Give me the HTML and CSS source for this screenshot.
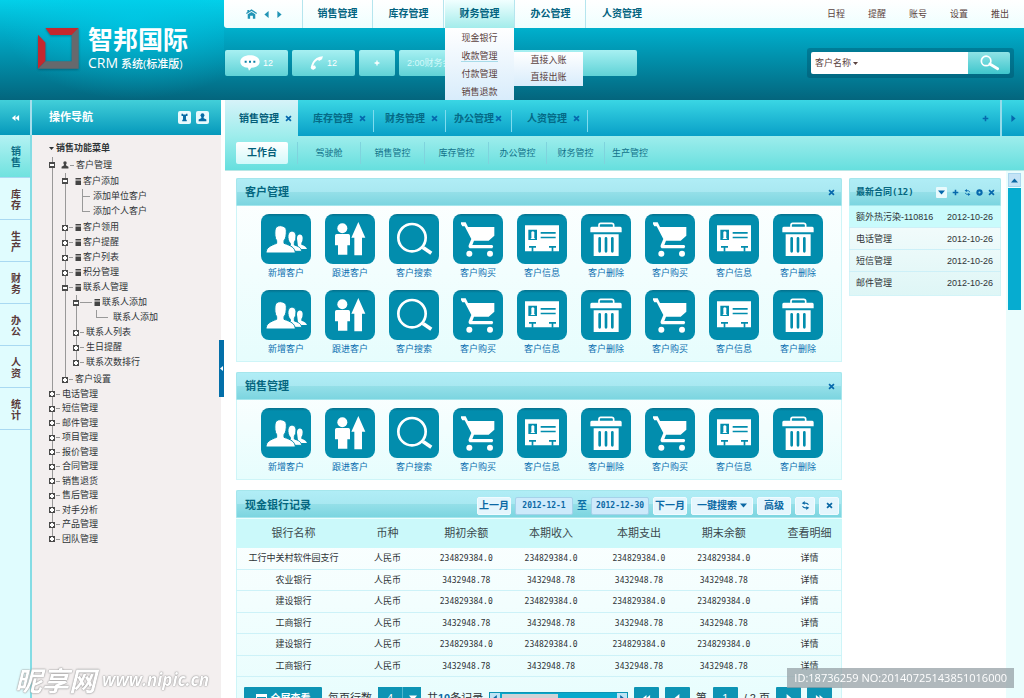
FILE: index.html
```html
<!DOCTYPE html>
<html lang="zh-CN">
<head>
<meta charset="utf-8">
<title>智邦国际 CRM 系统</title>
<link rel="stylesheet" href="styles.css">
</head>
<body>
<svg class="sprite" aria-hidden="true">
  <symbol id="i-users" viewBox="0 0 150 150"><path d="M108 74C107 58 125 58 125 72Q125 83 121 87V92Q135 96 138 105H112Z"/><path class="cut" d="M74 112Q74 100 88 94V88C82 83 80 72 81 63Q83 51 93 51Q104 52 105 63Q106 78 100 85V93C114 97 121 103 122 112Z"/><path class="cut" d="M15 117C15 101 28 95 47 88V80C41 72 41 60 42 48Q44 35 58 35Q76 36 76 50C76 62 75 74 69 80V88C90 95 102 101 103 117Z"/></symbol>
  <symbol id="i-follow" viewBox="0 0 150 150"><circle cx="52" cy="43" r="15"/><path d="M35 60H70Q75 60 75 65V94H67V122H39V94H30V65Q30 60 35 60ZM100 24L121 71H111V124H88V71H79Z"/></symbol>
  <symbol id="i-find" viewBox="0 0 150 150"><circle cx="69" cy="71" r="41" fill="none" stroke="#fff" stroke-width="8"/><path d="M97 98L104 104" fill="none" stroke="#fff" stroke-width="6"/><path d="M103 101L127 118" fill="none" stroke="#fff" stroke-width="11"/></symbol>
  <symbol id="i-cart" viewBox="0 0 150 150"><path d="M24 25H38L45 39H124V65L107 80H63L58 93H118Q123 97 118 103H50Q45 100 47 94L55 75L35 37H28Q22 31 24 25Z"/><circle cx="49" cy="119" r="9"/><circle cx="111" cy="119" r="9"/></symbol>
  <symbol id="i-card" viewBox="0 0 150 150"><path d="M24 34H126V112H24Z"/><path class="teal" d="M34 47H60V78H34ZM71 54H116V59H71ZM71 68H116V73H71ZM36 96H57V101H49V113H44V101H36ZM96 96H117V101H109V113H104V101H96Z"/><path d="M40 75Q45 72 43 64V54Q47 49 52 54V64Q50 72 55 75Z"/></symbol>
  <symbol id="i-trash" viewBox="0 0 150 150"><path d="M54 40V33Q54 28 59 28H92Q98 28 98 33V40" fill="none" stroke="#fff" stroke-width="5"/><path d="M32 38H118Q122 38 122 43V55H28V43Q28 38 32 38ZM38 61H113V126H38Z"/><path class="slot" d="M56 73V112M75 73V112M94 73V112"/></symbol>
  <symbol id="i-refresh" viewBox="0 0 12 12"><path d="M10 5Q8 2 4 3M2 7Q4 10 8 9" fill="none" stroke="currentColor" stroke-width="1.6"/><path d="M5 0V5L1 3ZM7 12V7L11 9Z" fill="currentColor"/></symbol>
  <symbol id="i-x" viewBox="0 0 10 10"><path d="M1.500 1.500L8.500 8.500M8.500 1.500L1.500 8.500" fill="none" stroke="currentColor" stroke-width="2.400"/></symbol>
  <symbol id="i-plus" viewBox="0 0 10 10"><path d="M5 1V9M1 5H9" fill="none" stroke="currentColor" stroke-width="2.200"/></symbol>
  <symbol id="i-down" viewBox="0 0 10 10"><path d="M0 2H10L5 8Z" fill="currentColor"/></symbol>
  <symbol id="i-up" viewBox="0 0 10 10"><path d="M0 8H10L5 2Z" fill="currentColor"/></symbol>
  <symbol id="i-left" viewBox="0 0 10 10"><path d="M8 0V10L2 5Z" fill="currentColor"/></symbol>
  <symbol id="i-right" viewBox="0 0 10 10"><path d="M2 0V10L8 5Z" fill="currentColor"/></symbol>
  <symbol id="i-first" viewBox="0 0 12 10"><path d="M6 0V10L0 5ZM12 0V10L6 5Z" fill="currentColor"/></symbol>
  <symbol id="i-last" viewBox="0 0 12 10"><path d="M0 0V10L6 5ZM6 0V10L12 5Z" fill="currentColor"/></symbol>
  <symbol id="i-person" viewBox="0 0 14 14"><circle cx="7" cy="3.500" r="3"/><path d="M5.500 5H8.500L9 8L13 10V13H1V10L5 8Z"/></symbol>
  <symbol id="i-file" viewBox="0 0 12 14"><path d="M1 0H12V3H1ZM1 5H12V14H1Z"/></symbol>
</svg>

<header class="header">
  <div class="brand">
    <svg class="brand-mark" viewBox="0 0 122 122" aria-hidden="true"><path fill="#c5282e" d="M22 0H121L101 21H37ZM0 20L22 43V98L0 121Z"/><path fill="#66696d" d="M121 0V121H0L22 99H100V21Z"/></svg>
    <div>
      <h1 class="brand-name">智邦国际</h1>
      <p class="brand-sub"><span class="brand-crm">CRM</span> 系统(标准版)</p>
    </div>
  </div>
  <div class="header-main">
    <div class="topbar">
      <div class="topbar-home">
        <button aria-label="首页"><svg class="ico-home" viewBox="0 0 32 28"><path d="M16 0L32 11L30 14L16 5L2 14L0 11ZM4 2H9V6L4 9ZM5 15L16 8L27 15V28H20V19H12V28H5Z" fill="currentColor"/></svg></button>
        <button aria-label="后退"><svg class="ico-s"><use href="#i-left"/></svg></button>
        <button aria-label="前进"><svg class="ico-s"><use href="#i-right"/></svg></button>
      </div>
      <nav class="topnav">
        <a href="#">销售管理</a>
        <a href="#">库存管理</a>
        <div class="topnav-open">
          <a href="#">财务管理</a>
          <ul class="menu">
            <li><a href="#">现金银行</a></li>
            <li><a href="#" class="is-current">收款管理</a>
              <ul class="submenu">
                <li><a href="#">直接入账</a></li>
                <li><a href="#">直接出账</a></li>
              </ul>
            </li>
            <li><a href="#">付款管理</a></li>
            <li><a href="#">销售退款</a></li>
          </ul>
        </div>
        <a href="#">办公管理</a>
        <a href="#">人资管理</a>
      </nav>
      <nav class="userlinks">
        <a href="#">日程</a><a href="#">提醒</a><a href="#">账号</a><a href="#">设置</a><a href="#">推出</a>
      </nav>
    </div>
    <div class="tools">
      <button class="tool"><svg class="ico-chat" viewBox="0 0 60 48"><path fill="#fff" d="M30 1C48 1 59 10 59 20C59 31 47 38 34 38L27 47L24 38C10 37 1 30 1 20C1 9 13 1 30 1Z"/><path fill="#0b7fa5" d="M14 17H20V23H14ZM27 17H33V23H27ZM40 17H46V23H40Z"/></svg>12</button>
      <button class="tool"><svg class="ico-phone" viewBox="0 0 40 42"><path fill="#fff" d="M38 1L28 2Q8 8 3 28L1 36Q4 42 10 41L17 36L14 28L9 30Q10 18 23 11L26 15L35 10Z"/></svg>12</button>
      <button class="tool tool-add" aria-label="添加"><svg class="ico-s"><use href="#i-plus"/></svg></button>
      <div class="tool tool-note">2:00财务会议</div>
      <form class="search">
        <div class="search-box">
          <select aria-label="搜索范围"><option>客户名称</option></select>
          <svg class="ico-caret" aria-hidden="true"><use href="#i-down"/></svg>
          <input type="text" aria-label="搜索内容">
        </div>
        <button type="button" aria-label="搜索"><svg class="ico-search" viewBox="0 0 56 46"><circle cx="18" cy="17" r="14" fill="none" stroke="#fff" stroke-width="5"/><path d="M29 26L52 40" stroke="#fff" stroke-width="8" stroke-linecap="round"/></svg></button>
      </form>
    </div>
  </div>
</header>

<div class="layout">
  <aside class="side">
    <div class="side-head">
      <button class="side-fold" aria-label="收起"><svg class="ico-first"><use href="#i-first"/></svg></button>
      <div class="side-title">
        <h2>操作导航</h2>
        <button aria-label="筛选"><svg viewBox="0 0 12 12"><path d="M2 1H4V2H8V1H10V4H8V9H9V11H3V9H4V4H2Z"/></svg></button>
        <button aria-label="用户"><svg viewBox="0 0 14 14"><use href="#i-person"/></svg></button>
      </div>
    </div>
    <div class="side-body">
      <nav class="rail">
        <a href="#" class="is-on">销售</a><a href="#">库存</a><a href="#">生产</a><a href="#">财务</a><a href="#">办公</a><a href="#">人资</a><a href="#">统计</a>
      </nav>
      <div class="tree">
        <p class="tree-title"><svg class="ico-tri"><use href="#i-down"/></svg>销售功能菜单</p>
        <ul class="tree-root">
          <li><div class="row row-tall"><i class="tg"></i><svg class="ico-person"><use href="#i-person"/></svg><i class="dash"></i>客户管理</div>
            <ul class="lv2">
              <li><div class="row row-tall"><i class="tg"></i><svg class="ico-file apart"><use href="#i-file"/></svg>客户添加</div>
                <ul class="leaf"><li class="row">添加单位客户</li><li class="row">添加个人客户</li></ul>
              </li>
              <li class="row"><i class="tg plus"></i><i class="dash"></i><svg class="ico-file"><use href="#i-file"/></svg>客户领用</li>
              <li class="row"><i class="tg plus"></i><i class="dash"></i><svg class="ico-file"><use href="#i-file"/></svg>客户提醒</li>
              <li class="row"><i class="tg plus"></i><i class="dash"></i><svg class="ico-file"><use href="#i-file"/></svg>客户列表</li>
              <li class="row"><i class="tg plus"></i><i class="dash"></i><svg class="ico-file"><use href="#i-file"/></svg>积分管理</li>
              <li><div class="row"><i class="tg"></i><i class="dash"></i><svg class="ico-file"><use href="#i-file"/></svg>联系人管理</div>
                <ul class="lv3">
                  <li><div class="row"><i class="tg"></i><i class="dash dash-long"></i><svg class="ico-file"><use href="#i-file"/></svg>联系人添加</div>
                    <ul class="leaf leaf-deep"><li class="row">联系人添加</li></ul>
                  </li>
                  <li class="row"><i class="tg plus"></i><i class="dash"></i>联系人列表</li>
                  <li class="row"><i class="tg plus"></i><i class="dash"></i>生日提醒</li>
                  <li class="row"><i class="tg plus"></i><i class="dash"></i>联系次数排行</li>
                </ul>
              </li>
              <li class="row"><i class="tg plus"></i><i class="dash"></i>客户设置</li>
            </ul>
          </li>
        </ul>
        <ul class="tree-root tree-more">
          <li class="row"><i class="tg plus"></i><i class="dash"></i>电话管理</li>
          <li class="row"><i class="tg plus"></i><i class="dash"></i>短信管理</li>
          <li class="row"><i class="tg plus"></i><i class="dash"></i>邮件管理</li>
          <li class="row"><i class="tg plus"></i><i class="dash"></i>项目管理</li>
          <li class="row"><i class="tg plus"></i><i class="dash"></i>报价管理</li>
          <li class="row"><i class="tg plus"></i><i class="dash"></i>合同管理</li>
          <li class="row"><i class="tg plus"></i><i class="dash"></i>销售退货</li>
          <li class="row"><i class="tg plus"></i><i class="dash"></i>售后管理</li>
          <li class="row"><i class="tg plus"></i><i class="dash"></i>对手分析</li>
          <li class="row"><i class="tg plus"></i><i class="dash"></i>产品管理</li>
          <li class="row"><i class="tg plus"></i><i class="dash"></i>团队管理</li>
        </ul>
      </div>
    </div>
    <button class="side-handle" aria-label="折叠侧栏"><svg class="ico-tiny"><use href="#i-left"/></svg></button>
  </aside>

  <main class="main">
    <div class="tabs">
      <div class="tab is-on"><a href="#">销售管理</a><button aria-label="关闭"><svg class="ico-x"><use href="#i-x"/></svg></button></div>
      <div class="tab tab-wide"><a href="#">库存管理</a><button aria-label="关闭"><svg class="ico-x"><use href="#i-x"/></svg></button></div>
      <div class="tab"><a href="#">财务管理</a><button aria-label="关闭"><svg class="ico-x"><use href="#i-x"/></svg></button></div>
      <div class="tab tab-tight"><a href="#">办公管理</a><button aria-label="关闭"><svg class="ico-x"><use href="#i-x"/></svg></button></div>
      <div class="tab tab-wide"><a href="#">人资管理</a><button aria-label="关闭"><svg class="ico-x"><use href="#i-x"/></svg></button></div>
      <button class="tabs-add" aria-label="新标签"><svg class="ico-x"><use href="#i-plus"/></svg></button>
      <button class="tabs-next" aria-label="下一组"><svg class="ico-x"><use href="#i-right"/></svg></button>
    </div>
    <nav class="subnav">
      <a href="#" class="is-on">工作台</a>
      <a href="#">驾驶舱</a><a href="#">销售管控</a><a href="#">库存管控</a><a href="#" class="narrow">办公管控</a><a href="#" class="narrow">财务管控</a><a href="#" class="last">生产管控</a>
    </nav>
    <div class="work">
      <div class="panels">
        <section class="panel">
          <div class="panel-head"><h3>客户管理</h3><button class="bare" aria-label="关闭"><svg class="ico-x"><use href="#i-x"/></svg></button></div>
          <div class="apps">
            <a href="#"><svg><use href="#i-users"/></svg>新增客户</a>
            <a href="#"><svg><use href="#i-follow"/></svg>跟进客户</a>
            <a href="#"><svg><use href="#i-find"/></svg>客户搜索</a>
            <a href="#"><svg><use href="#i-cart"/></svg>客户购买</a>
            <a href="#"><svg><use href="#i-card"/></svg>客户信息</a>
            <a href="#"><svg><use href="#i-trash"/></svg>客户删除</a>
            <a href="#"><svg><use href="#i-cart"/></svg>客户购买</a>
            <a href="#"><svg><use href="#i-card"/></svg>客户信息</a>
            <a href="#"><svg><use href="#i-trash"/></svg>客户删除</a>
            <a href="#"><svg><use href="#i-users"/></svg>新增客户</a>
            <a href="#"><svg><use href="#i-follow"/></svg>跟进客户</a>
            <a href="#"><svg><use href="#i-find"/></svg>客户搜索</a>
            <a href="#"><svg><use href="#i-cart"/></svg>客户购买</a>
            <a href="#"><svg><use href="#i-card"/></svg>客户信息</a>
            <a href="#"><svg><use href="#i-trash"/></svg>客户删除</a>
            <a href="#"><svg><use href="#i-cart"/></svg>客户购买</a>
            <a href="#"><svg><use href="#i-card"/></svg>客户信息</a>
            <a href="#"><svg><use href="#i-trash"/></svg>客户删除</a>
          </div>
        </section>
        <section class="panel">
          <div class="panel-head"><h3>销售管理</h3><button class="bare" aria-label="关闭"><svg class="ico-x"><use href="#i-x"/></svg></button></div>
          <div class="apps">
            <a href="#"><svg><use href="#i-users"/></svg>新增客户</a>
            <a href="#"><svg><use href="#i-follow"/></svg>跟进客户</a>
            <a href="#"><svg><use href="#i-find"/></svg>客户搜索</a>
            <a href="#"><svg><use href="#i-cart"/></svg>客户购买</a>
            <a href="#"><svg><use href="#i-card"/></svg>客户信息</a>
            <a href="#"><svg><use href="#i-trash"/></svg>客户删除</a>
            <a href="#"><svg><use href="#i-cart"/></svg>客户购买</a>
            <a href="#"><svg><use href="#i-card"/></svg>客户信息</a>
            <a href="#"><svg><use href="#i-trash"/></svg>客户删除</a>
          </div>
        </section>
        <section class="panel">
          <div class="panel-head panel-head-tools">
            <h3>现金银行记录</h3>
            <button class="chip">上一月</button>
            <input class="date" type="text" value="2012-12-1" aria-label="开始日期">
            <label for="date-to">至</label>
            <input class="date" id="date-to" type="text" value="2012-12-30">
            <button class="chip">下一月</button>
            <button class="chip chip-wide">一键搜索<svg class="ico-tri"><use href="#i-down"/></svg></button>
            <button class="chip chip-mid">高级</button>
            <button class="chip chip-icon" aria-label="刷新"><svg class="ico-r"><use href="#i-refresh"/></svg></button>
            <button class="chip chip-icon" aria-label="关闭"><svg class="ico-x"><use href="#i-x"/></svg></button>
          </div>
          <table class="records">
            <colgroup><col class="c19"><col class="c12"><col class="c14"><col class="c14"><col class="c15"><col class="c13"><col class="c13"></colgroup>
            <thead><tr><th>银行名称</th><th>币种</th><th>期初余额</th><th>本期收入</th><th>本期支出</th><th>期末余额</th><th>查看明细</th></tr></thead>
            <tbody>
              <tr><td>工行中关村软件园支行</td><td>人民币</td><td class="num">234829384.0</td><td class="num">234829384.0</td><td class="num">234829384.0</td><td class="num">234829384.0</td><td><a href="#">详情</a></td></tr>
              <tr><td>农业银行</td><td>人民币</td><td class="num">3432948.78</td><td class="num">3432948.78</td><td class="num">3432948.78</td><td class="num">3432948.78</td><td><a href="#">详情</a></td></tr>
              <tr><td>建设银行</td><td>人民币</td><td class="num">234829384.0</td><td class="num">234829384.0</td><td class="num">234829384.0</td><td class="num">234829384.0</td><td><a href="#">详情</a></td></tr>
              <tr><td>工商银行</td><td>人民币</td><td class="num">3432948.78</td><td class="num">3432948.78</td><td class="num">3432948.78</td><td class="num">3432948.78</td><td><a href="#">详情</a></td></tr>
              <tr><td>建设银行</td><td>人民币</td><td class="num">234829384.0</td><td class="num">234829384.0</td><td class="num">234829384.0</td><td class="num">234829384.0</td><td><a href="#">详情</a></td></tr>
              <tr><td>工商银行</td><td>人民币</td><td class="num">3432948.78</td><td class="num">3432948.78</td><td class="num">3432948.78</td><td class="num">3432948.78</td><td><a href="#">详情</a></td></tr>
            </tbody>
          </table>
          <div class="pager">
            <button class="pg pg-full"><i class="ico-screen"></i>全屏查看</button>
            <label for="rows">每页行数</label>
            <div class="pg-select"><select id="rows"><option>4</option></select><svg class="ico-s"><use href="#i-down"/></svg></div>
            <span>共<b>10</b>条记录</span>
            <div class="hscroll"><svg><use href="#i-left"/></svg><i></i><svg><use href="#i-right"/></svg></div>
            <button class="pg" aria-label="首页"><svg class="ico-first"><use href="#i-first"/></svg></button>
            <button class="pg" aria-label="上一页"><svg class="ico-s"><use href="#i-left"/></svg></button>
            <label for="page">第</label>
            <input class="pg" id="page" type="text" value="1">
            <span>/ 2 页</span>
            <button class="pg" aria-label="下一页"><svg class="ico-s"><use href="#i-right"/></svg></button>
            <button class="pg" aria-label="末页"><svg class="ico-first"><use href="#i-last"/></svg></button>
          </div>
        </section>
      </div>
      <section class="contracts">
        <div class="panel-head contracts-head">
          <h3>最新合同(12)</h3>
          <button class="bare boxed" aria-label="菜单"><svg class="ico-x"><use href="#i-down"/></svg></button>
          <button class="bare" aria-label="添加"><svg class="ico-x"><use href="#i-plus"/></svg></button>
          <button class="bare" aria-label="刷新"><svg class="ico-x"><use href="#i-refresh"/></svg></button>
          <button class="bare" aria-label="设置"><svg class="ico-x" viewBox="0 0 10 10"><circle cx="5" cy="5" r="3" fill="none" stroke="currentColor" stroke-width="3"/></svg></button>
          <button class="bare" aria-label="关闭"><svg class="ico-x"><use href="#i-x"/></svg></button>
        </div>
        <ul>
          <li class="is-on"><a href="#">额外热污染-110816</a><time>2012-10-26</time></li>
          <li><a href="#">电话管理</a><time>2012-10-26</time></li>
          <li><a href="#">短信管理</a><time>2012-10-26</time></li>
          <li><a href="#">邮件管理</a><time>2012-10-26</time></li>
        </ul>
      </section>
      <div class="vscroll"><button aria-label="向上滚动"><svg class="ico-x"><use href="#i-up"/></svg></button><i class="vscroll-thumb"></i></div>
    </div>
  </main>
</div>

<div class="mark-left"><b>昵享网</b><span>www.nipic.cn</span></div>
<div class="mark-right">ID:18736259 NO:20140725143851016000</div>
</body>
</html>
```

FILE: styles.css
```css
* { box-sizing: border-box; }
body {
  margin: 0;
  height: 100vh;
  overflow: hidden;
  display: flex;
  flex-direction: column;
  background: #fff;
  color: #2f3437;
  font: 9px/15px "Liberation Sans", "Noto Sans CJK SC", sans-serif;
}
h1, h2, h3, p, ul { margin: 0; padding: 0; }
ul { list-style: none; }
a { color: inherit; text-decoration: none; }
button, input, select { font: inherit; color: inherit; margin: 0; padding: 0; border: 0; background: none; }
button { display: flex; align-items: center; justify-content: center; cursor: pointer; }
select { appearance: none; }
svg { display: block; flex: none; }
.sprite { position: absolute; width: 0; height: 0; }
.ico-s { width: 8px; height: 8px; }
.ico-x { width: 7px; height: 7px; }
.ico-r { width: 9px; height: 9px; }
.ico-tri { width: 7px; height: 7px; }
.ico-tiny { width: 5px; height: 5px; }
.ico-first { width: 9px; height: 6px; }

/* header */
.header {
  flex: none;
  display: flex;
  height: 100px;
  background: linear-gradient(#03d0e9, #00a8c5 35%, #03657d);
}
.brand {
  width: 224px;
  flex: none;
  display: flex;
  align-items: flex-start;
  gap: 9px;
  padding: 22px 0 0 38px;
  background: radial-gradient(ellipse at 60% 20%, rgba(0, 205, 235, .6), transparent 70%);
}
.brand-mark { width: 41px; height: 41px; margin-top: 6px; filter: drop-shadow(0 1px 1px rgba(0, 40, 60, .4)); }
.brand-name { color: #fff; font: bold 25px/33px "Noto Sans CJK SC", sans-serif; white-space: nowrap; }
.brand-sub { color: #fff; font: 500 11px/16px "Open Sans", "Noto Sans CJK SC", sans-serif; white-space: nowrap; }
.brand-crm { font-size: 14px; }
.header-main { flex: 1; min-width: 0; }
.topbar {
  display: flex;
  height: 28px;
  background: linear-gradient(#fff, #eefefe);
  border-bottom-left-radius: 3px;
}
.topbar-home {
  width: 79px;
  display: flex;
  align-items: center;
  gap: 6px;
  padding-left: 22px;
  color: #2194b5;
  border-right: 1px solid #b5e5ee;
}
.topbar-home .ico-s { width: 7px; height: 7px; }
.ico-home { width: 11px; height: 10px; }
.topnav { display: flex; gap: 1px; color: #03637f; font-weight: bold; font-size: 10px; line-height: 28px; }
.topnav > a, .topnav-open { width: 70px; text-align: center; border-right: 1px solid #b5e5ee; }
.topnav > a:last-child { border: 0; }
.topnav-open { position: relative; z-index: 5; background: linear-gradient(#f1ffff, #a3eceb); }
.menu, .submenu {
  position: absolute;
  width: 69px;
  background: linear-gradient(#fff, #d8ecfb);
  color: #5a4240;
  font-weight: normal;
  font-size: 9px;
  line-height: 16px;
}
.menu { top: 28px; left: 0; padding: 2px 0 0; display: grid; gap: 2px; }
.menu > li { position: relative; }
.menu .is-current { border-bottom: 1px solid #a8dcea; }
.submenu { top: 4px; left: 100%; line-height: 17px; }
.userlinks { display: flex; gap: 23px; margin-left: auto; padding-right: 15px; line-height: 28px; color: #5a4240; }
.tools { display: flex; gap: 4px; padding: 22px 10px 0 1px; align-items: flex-start; }
.tool {
  width: 63px;
  height: 26px;
  display: flex;
  align-items: center;
  justify-content: center;
  gap: 3px;
  border-radius: 2px;
  color: #fff;
  background: linear-gradient(#a7f0f2, #5fd2d6);
}
.tool-add { width: 36px; }
.tool-add .ico-s { width: 6px; }
.tool-note { width: 238px; justify-content: flex-start; padding-left: 8px; color: #d5fafa; }
.ico-chat { width: 20px; height: 16px; }
.ico-phone { width: 14px; height: 14px; }
.search { display: flex; margin-left: auto; margin-top: -2px; padding: 4px; background: rgba(0, 70, 95, .35); border-radius: 3px; }
.search-box { display: flex; align-items: center; width: 157px; height: 22px; padding-left: 4px; background: #fff; border-radius: 2px 0 0 2px; color: #5a4240; }
.search-box input { flex: 1; min-width: 0; height: 22px; }
.search-box select { width: 38px; }
.ico-caret { width: 5px; height: 5px; }
.search button { width: 42px; height: 22px; background: linear-gradient(#8fe3e6, #3fc6cc); border-radius: 0 2px 2px 0; }
.ico-search { width: 19px; height: 16px; }

/* sidebar */
.layout { flex: 1; min-height: 0; display: flex; gap: 4px; }
.side { position: relative; flex: none; width: 221px; display: flex; flex-direction: column; }
.side-head { display: flex; gap: 2px; height: 35px; background: #a6dfec; color: #fff; }
.side-fold { width: 30px; background: linear-gradient(#42cfd9, #0598bb); }
.side-title { flex: 1; display: flex; align-items: center; gap: 5px; padding: 0 12px 0 17px; background: linear-gradient(#42cfd9, #0598bb); }
.side-title h2 { margin-right: auto; font-size: 11px; }
.side-title button { width: 13px; height: 13px; background: #e8fafd; border-radius: 2px; }
.side-title svg { width: 9px; height: 9px; fill: #066ba5; }
.side-body { flex: 1; min-height: 0; display: flex; }
.rail { width: 32px; flex: none; background: #e0fcfe; border-right: 2px solid #84dce4; }
.rail a {
  display: flex;
  align-items: center;
  justify-content: center;
  height: 42px;
  padding: 2px 9px 0 11px;
  color: #5a3a3a;
  font-weight: bold;
  font-size: 10px;
  line-height: 11px;
  border-bottom: 1px solid #a9d9f2;
}
.rail .is-on { height: 43px; color: #0b6c84; background: linear-gradient(#b3f2f3, #70e2df); }
.tree { flex: 1; padding: 5px 0 0 17px; background: #f3efef; overflow: hidden; }
.tree-title { display: flex; align-items: center; height: 17px; font-weight: bold; }
.tree-title .ico-tri { width: 5px; height: 5px; margin-right: 2px; }
.tree-root, .lv2, .lv3 { background: linear-gradient(#999, #999) 3px 0 / 1px 100% no-repeat; }
.lv2 { margin-left: 13px; background-size: 1px calc(100% - 8px); }
.lv3 { margin: 0 0 2px 11px; background-size: 1px calc(100% - 8px); }
.leaf { margin: 0 0 1px 20px; background: linear-gradient(#999, #999) 0 0 / 1px calc(100% - 8px) no-repeat; }
.leaf-deep { margin: 0 0 0 23px; }
.row { display: flex; align-items: center; height: 15px; white-space: nowrap; }
.row-tall { height: 16px; }
.tree-more { background-size: 1px calc(100% - 8px); }
.tree-more .row:nth-child(odd) { height: 14px; }
.leaf .row::before { content: ""; width: 8px; height: 1px; margin-right: 3px; background: #999; }
.leaf-deep .row::before { width: 12px; margin-right: 5px; }
.tg {
  width: 6px;
  height: 6px;
  flex: none;
  background: linear-gradient(#fff, #fff) center / 4px 2px no-repeat, #4a4a4a;
}
.tg.plus { background: linear-gradient(#fff, #fff) center / 2px 4px no-repeat, linear-gradient(#fff, #fff) center / 4px 2px no-repeat, #4a4a4a; }
.dash { width: 4px; height: 1px; flex: none; margin: 0 2px 0 1px; background: #999; }
.dash-long { width: 12px; }
.ico-person { width: 8px; height: 8px; margin-left: 6px; fill: #444; }
.ico-file { width: 6px; height: 7px; margin-right: 2px; fill: #444; }
.apart { margin-left: 7px; }
.side-handle { position: absolute; top: 240px; right: -3px; width: 5px; height: 57px; color: #fff; background: #036fa9; }

/* main */
.main { flex: 1; min-width: 0; display: flex; flex-direction: column; }
.tabs { flex: none; display: flex; height: 36px; background: linear-gradient(#3ad6e4, #089fc7); color: #046a86; font-weight: bold; font-size: 10px; }
.tab { width: 72px; display: flex; align-items: center; justify-content: flex-end; gap: 6px; padding-right: 8px; background: linear-gradient(#7fdcee, #7fdcee) right 10px / 1px 22px no-repeat; }
.tab button, .tabs-next, .tabs-add { color: #0668ac; }
.tab-wide { width: 76px; }
.tab-tight { width: 66px; gap: 1px; padding-right: 10px; }
.tab.is-on { width: 73px; padding-right: 6px; color: #035e79; background: linear-gradient(#d6f3f9, #9eedec); }
.tabs-add { margin-left: auto; width: 29px; }
.tabs-next { width: 24px; border-left: 2px solid #95dcea; }
.subnav { flex: none; display: flex; align-items: center; height: 35px; padding-left: 11px; background: linear-gradient(#9eedec, #66dfde); border-bottom: 1px solid #b9e7e6; color: #12728a; line-height: 22px; }
.subnav a { width: 64px; text-align: center; border-right: 1px solid #7fd3dd; }
.subnav .narrow { width: 58px; }
.subnav .last { width: 50px; border: 0; }
.subnav .is-on { width: 52px; margin-right: 9px; color: #035e79; font-weight: bold; font-size: 10px; background: linear-gradient(#fff, #d3f9fa); border: 0; border-radius: 2px; }
.subnav .is-on + a { border-left: 1px solid #7fd3dd; }
.work { flex: 1; min-height: 0; display: flex; padding-left: 11px; }
.panels { flex: 1; min-width: 0; padding-top: 7px; display: flex; flex-direction: column; gap: 10px; }
.panel { flex: none; background: linear-gradient(#fff, #e6fdfd); box-shadow: inset 0 0 0 1px #cef5f8; }
.panel-head {
  display: flex;
  align-items: center;
  height: 28px;
  padding: 0 6px 0 8px;
  color: #04667f;
  background: linear-gradient(#b0edf6, #a9e8f1 50%, #94dfe8 51%, #7cd5e0);
  border: 1px solid #a5e6ec;
  border-radius: 2px 2px 0 0;
}
.panel-head h3 { margin-right: auto; font-size: 11px; }
.bare { color: #0668ac; height: 12px; }
.apps { display: grid; grid-template-columns: repeat(auto-fill, 50px); gap: 8px 14px; padding: 8px 10px 4px 25px; }
.apps a { display: block; color: #0a6fb0; text-align: center; line-height: 18px; white-space: nowrap; }
.apps svg { width: 50px; height: 50px; fill: #fff; border-radius: 8px; background: linear-gradient(#04708c, #028dad 3px); }
.teal { fill: #028dad; }
.slot { fill: none; stroke: #028dad; stroke-width: 8; stroke-linecap: round; }
.cut { stroke: #028dad; stroke-width: 3; }
.panel-head-tools { gap: 4px; padding: 3px 2px 0 8px; color: #0a6fa5; font-size: 10px; }
.panel-head-tools h3 { color: #04667f; }
.chip { height: 18px; padding: 0 1px; background: #e4f6fd; border: 1px solid #f0fbff; border-radius: 2px; font-weight: bold; color: #0b68a4; }
.chip-mid { padding: 0 6px; }
.chip-wide { padding: 0 5px; gap: 3px; }
.chip-icon { width: 20px; }
.date { width: 58px; height: 18px; text-align: center; background: #cdeafb; border: 1px solid #a5d2ea; border-radius: 2px; color: #0b68a4; font: bold 8px "DejaVu Sans Mono", monospace; }
.panel-head label { font-weight: bold; }
.records { width: 100%; border-collapse: collapse; table-layout: fixed; text-align: center; }
.records th { height: 29px; padding: 0; font-weight: normal; font-size: 11px; white-space: nowrap; color: #3c4a4e; background: #cbf9fa; border-top: 1px solid #eefefe; }
.records td { height: 21px; padding: 0; border-bottom: 1px solid #cdf2f8; white-space: nowrap; }
.records tbody tr:nth-child(odd) td { height: 22px; }
.records td:last-child, .records th:last-child { padding-left: 14px; }
.num { font: 8px/15px "DejaVu Sans Mono", monospace; }
.c12 { width: 12%; }
.c13 { width: 13%; }
.c14 { width: 14%; }
.c15 { width: 15%; }
.c19 { width: 19%; }
.pager { display: flex; align-items: center; gap: 6px; padding: 10px 10px 8px 8px; font-size: 11px; white-space: nowrap; }
.pager b { color: #0b68a4; }
.pg { width: 25px; height: 22px; text-align: center; color: #fff; background: #0d94b4; border-radius: 1px; }
.pg-full { width: 78px; gap: 4px; font-weight: bold; font-size: 10px; }
.ico-screen { width: 11px; height: 8px; border: 1px solid #fff; border-top-width: 3px; border-bottom-width: 3px; }
.pg-select { display: flex; align-items: center; width: 43px; height: 22px; padding-right: 4px; color: #fff; background: #0d94b4; }
.pg-select select { flex: 1; min-width: 0; height: 22px; padding-left: 9px; border-right: 1px solid #4db7cf; margin-right: 6px; }
.hscroll { flex: 1; display: flex; align-items: center; height: 12px; border: 1px solid #0d94b4; background: #09a9cc; }
.hscroll svg { width: 10px; height: 10px; padding: 2px; color: #0b68a4; background: #bfe4f5; }
.hscroll i { width: 56px; height: 8px; margin: 0 auto 0 2px; background: #d0d3d6; }

.contracts { flex: none; align-self: flex-start; width: 152px; margin: 7px 5px 0 7px; background: linear-gradient(#fff, #def6f6); box-shadow: inset 0 0 0 1px #d3f4f8; }
.contracts-head { gap: 5px; padding: 0 5px 0 6px; }
.contracts-head h3 { font: bold 9px/15px "DejaVu Sans Mono", "Noto Sans CJK SC", monospace; white-space: nowrap; }
.boxed { width: 11px; height: 11px; background: #e8fafd; border-radius: 1px; }
.contracts ul { padding-bottom: 2px; }
.contracts li { display: flex; justify-content: space-between; height: 22px; padding: 0 8px 0 7px; line-height: 22px; border-bottom: 1px solid #cdf0f8; }
.contracts li:last-child { border: 0; }
.contracts .is-on { background: #c9fbfc; }
.vscroll { width: 18px; flex: none; padding: 2px 3px 0 2px; background: #eafdfd; }
.vscroll button { width: 13px; height: 14px; color: #0b68a4; background: #c4e3f6; border: 1px solid #a9d6ee; }
.vscroll-thumb { display: block; height: 122px; margin-top: 1px; background: #06acd0; }

.mark-left {
  position: fixed;
  left: 15px;
  bottom: 4px;
  display: flex;
  align-items: center;
  gap: 6px;
  color: #fff;
  font: italic bold 17px/28px "Open Sans", sans-serif;
  text-shadow: 0 0 1px #777, 0 0 2px #999;
}
.mark-left b { font: italic bold 27px/28px "Noto Sans CJK SC", sans-serif; }
.mark-right {
  position: fixed;
  right: 10px;
  bottom: 10px;
  padding: 0 7px;
  color: #fff;
  background: rgba(150, 160, 165, .75);
  font: 11px/20px "Open Sans", sans-serif;
}
```
